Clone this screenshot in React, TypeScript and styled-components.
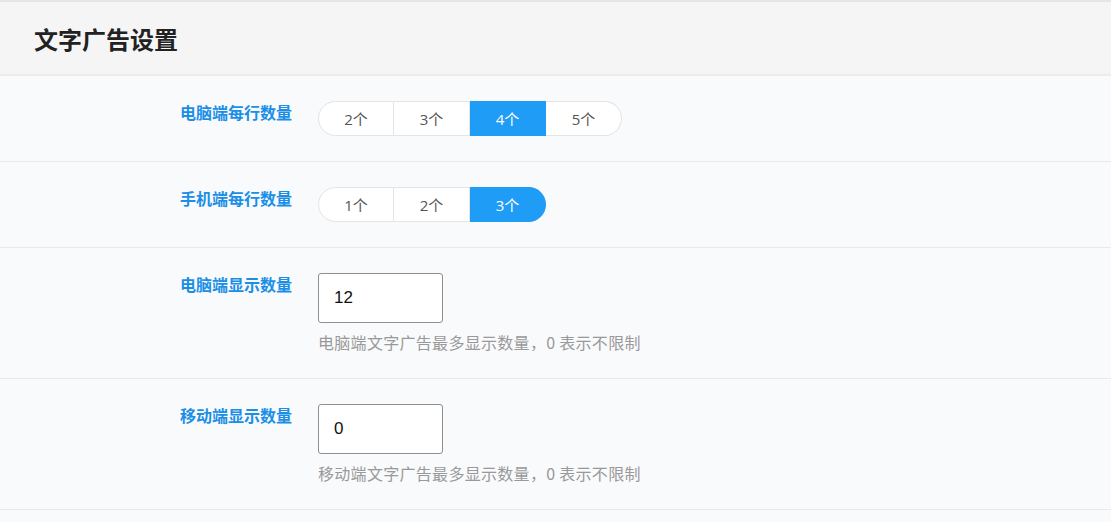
import * as React from 'react';
import styled, { createGlobalStyle } from 'styled-components';

const GlobalStyle = createGlobalStyle`
  html, body {
    margin: 0;
    padding: 0;
    background: #f9fafc;
  }

  body {
    font-family: 'Open Sans', 'Noto Sans CJK SC', sans-serif;
    font-size: 14px;
    color: #333;
  }
`;

const Panel = styled.div`
  width: 1111px;
  min-height: 522px;
  border-top: 2px solid #e6e6e6;
  background: #f9fafc;
`;

const Header = styled.div`
  height: 72px;
  display: flex;
  align-items: center;
  padding-left: 34px;
  background: #f5f5f5;
  border-bottom: 2px solid #ececec;
`;

const Title = styled.h2`
  margin: 0;
  font-family: 'Noto Sans CJK SC', sans-serif;
  font-size: 24px;
  font-weight: 700;
  color: #222;
`;

const Row = styled.div`
  display: grid;
  grid-template-columns: 292px 1fr;
  column-gap: 26px;
  padding: 25px 0 25px;
  border-bottom: 1px solid #e8e9ec;
`;

const Label = styled.div`
  text-align: right;
  font-family: 'Noto Sans CJK SC', sans-serif;
  font-size: 16px;
  line-height: 22px;
  font-weight: 700;
  color: #1b8fe6;
`;

const Field = styled.div`
  display: flex;
  flex-direction: column;
  align-items: flex-start;
`;

const Segmented = styled.div`
  display: flex;
  height: 35px;
`;

const Segment = styled.button<{ $active: boolean; $first: boolean; $last: boolean }>`
  width: 76px;
  height: 35px;
  padding: 0;
  margin: 0;
  font-family: 'Open Sans', 'Noto Sans CJK SC', sans-serif;
  font-size: 15px;
  color: ${p => (p.$active ? '#fff' : '#555')};
  background: ${p => (p.$active ? '#1f9cf6' : '#fff')};
  border: 1px solid ${p => (p.$active ? '#1f9cf6' : '#e4e4e4')};
  border-left-width: ${p => (p.$first ? '1px' : '0')};
  border-radius: ${p =>
    p.$first ? '18px 0 0 18px' : p.$last ? '0 18px 18px 0' : '0'};
  cursor: pointer;
`;

const Input = styled.input`
  box-sizing: border-box;
  width: 125px;
  height: 50px;
  padding: 0 15px;
  border: 1px solid #8f8f8f;
  border-radius: 3px;
  background: #fff;
  font-family: 'Liberation Sans', Arial, sans-serif;
  font-size: 17px;
  color: #111;
  outline: none;
`;

const Help = styled.div`
  margin-top: 8px;
  font-family: 'Noto Sans CJK SC', sans-serif;
  font-size: 16px;
  line-height: 22px;
  letter-spacing: 0.3px;
  color: #999;
`;

function Choice({ options, value }: { options: string[]; value: string }) {
  return (
    <Segmented>
      {options.map((o, i) => (
        <Segment
          key={o}
          $active={o === value}
          $first={i === 0}
          $last={i === options.length - 1}
        >
          {o}
        </Segment>
      ))}
    </Segmented>
  );
}

export default function App() {
  return (
    <Panel>
      <GlobalStyle />
      <Header>
        <Title>文字广告设置</Title>
      </Header>
      <Row>
        <Label>电脑端每行数量</Label>
        <Field>
          <Choice options={['2个', '3个', '4个', '5个']} value="4个" />
        </Field>
      </Row>
      <Row>
        <Label>手机端每行数量</Label>
        <Field>
          <Choice options={['1个', '2个', '3个']} value="3个" />
        </Field>
      </Row>
      <Row>
        <Label>电脑端显示数量</Label>
        <Field>
          <Input defaultValue="12" />
          <Help>电脑端文字广告最多显示数量，0 表示不限制</Help>
        </Field>
      </Row>
      <Row>
        <Label>移动端显示数量</Label>
        <Field>
          <Input defaultValue="0" />
          <Help>移动端文字广告最多显示数量，0 表示不限制</Help>
        </Field>
      </Row>
    </Panel>
  );
}
